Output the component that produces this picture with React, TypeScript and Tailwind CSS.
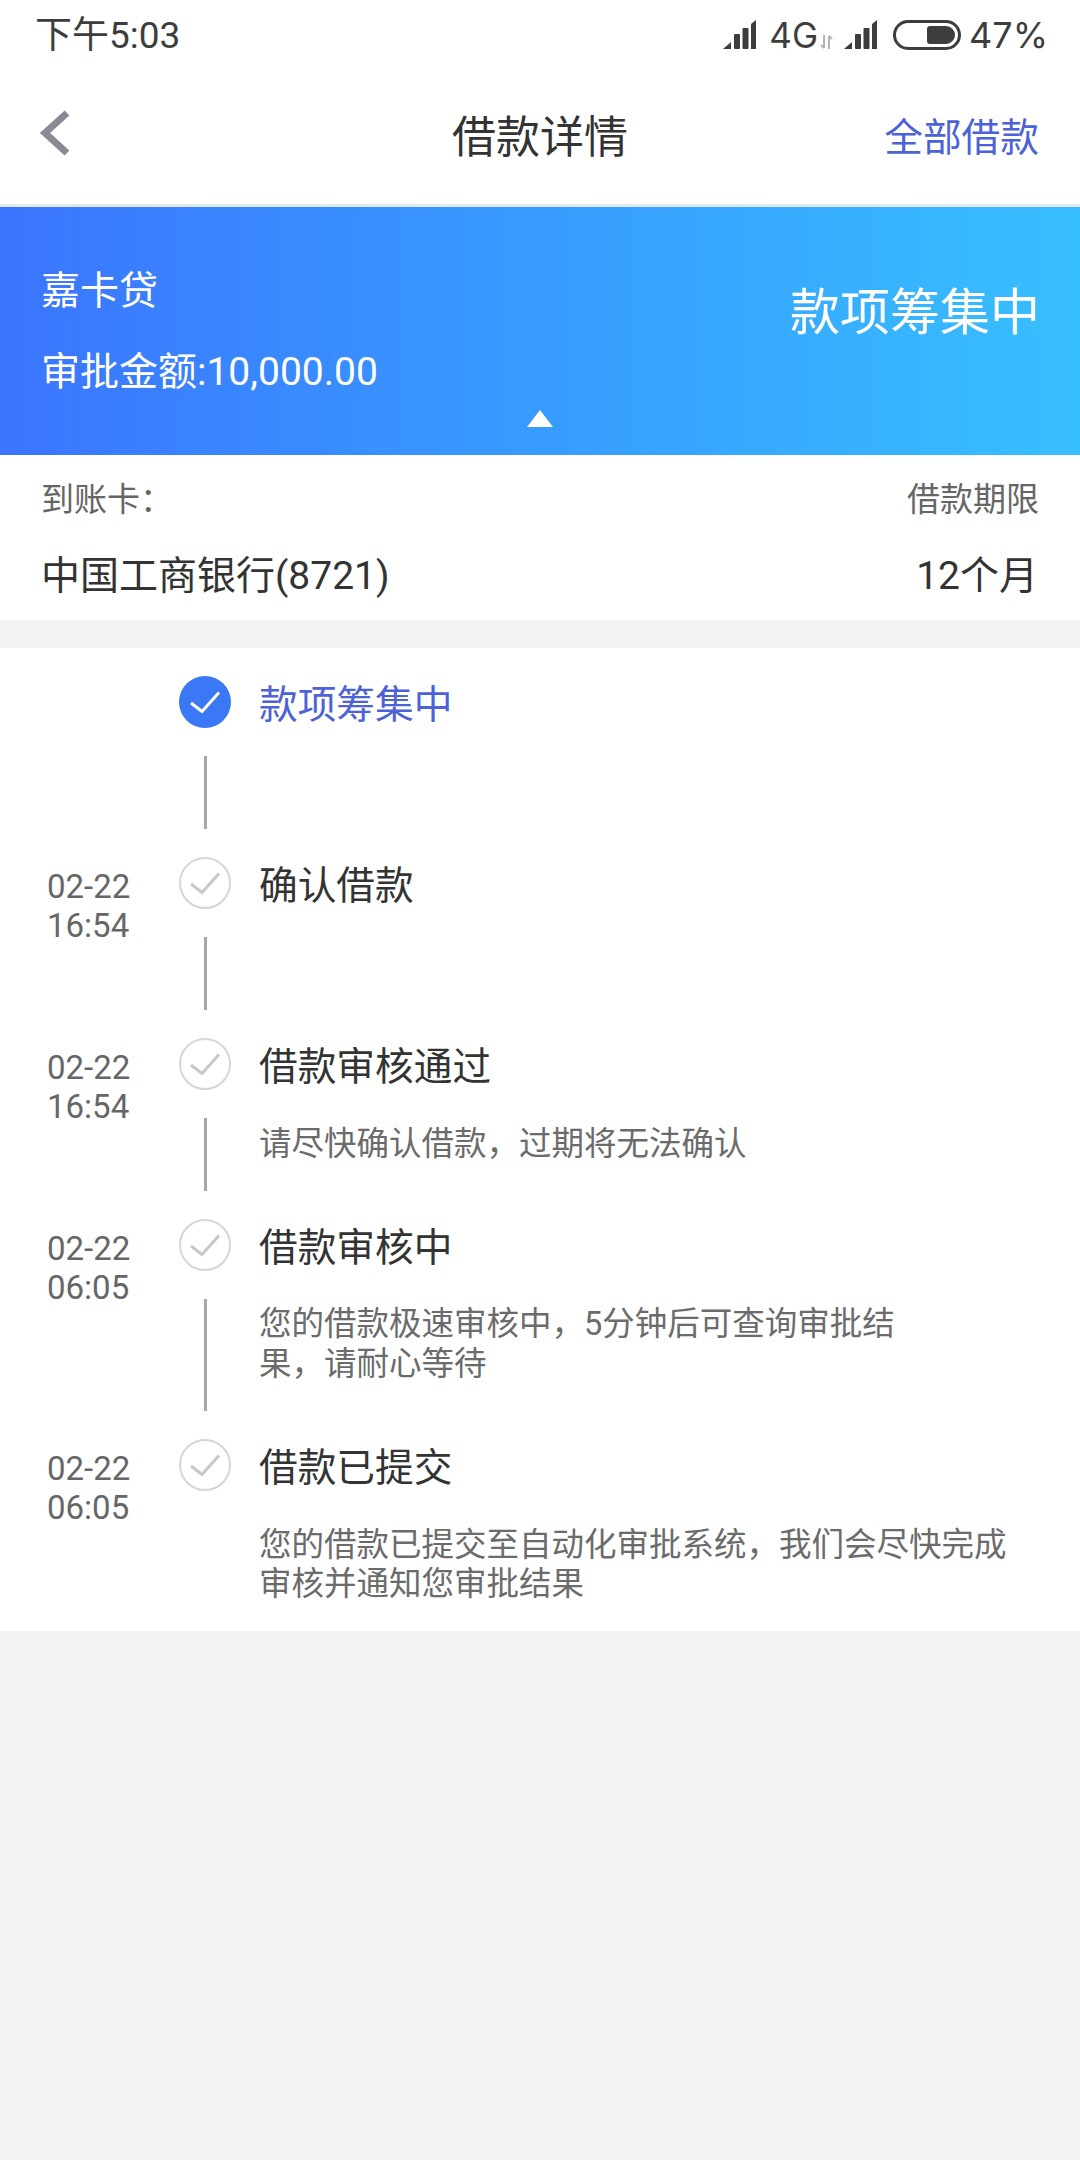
type Step = {
  title: string
  date?: string
  time?: string
  desc?: string[]
  rowH: string
  descGap: string
  active?: boolean
}

const steps: Step[] = [
  { title: '款项筹集中', active: true, rowH: 'h-[181px]', descGap: '' },
  { title: '确认借款', date: '02-22', time: '16:54', rowH: 'h-[181px]', descGap: '' },
  { title: '借款审核通过', date: '02-22', time: '16:54', desc: ['请尽快确认借款\uFF0C过期将无法确认'], rowH: 'h-[181px]', descGap: 'mt-[28px] leading-[40px]' },
  { title: '借款审核中', date: '02-22', time: '06:05', desc: ['您的借款极速审核中\uFF0C5分钟后可查询审批结', '果\uFF0C请耐心等待'], rowH: 'h-[220px]', descGap: 'mt-[27px] leading-[40px]' },
  { title: '借款已提交', date: '02-22', time: '06:05', desc: ['您的借款已提交至自动化审批系统\uFF0C我们会尽快完成', '审核并通知您审批结果'], rowH: 'h-[192px]', descGap: 'mt-[29px] leading-[39px]' },
]

function Signal() {
  return (
    <svg width="33" height="30" viewBox="0 0 33 30" fill="#3d3d3d">
      <path d="M0 29 L8 22 V29 Z" />
      <rect x="11" y="14" width="6" height="15" rx="1" />
      <rect x="19.5" y="8" width="6" height="21" rx="1" />
      <path d="M28 4 L33 0 V29 H28 Z" />
    </svg>
  )
}

function Arrows() {
  return (
    <svg width="13" height="14" viewBox="0 0 13 14" fill="none" stroke="#b5b5b5" strokeWidth="2">
      <path d="M4 0 V13 M1 10 L4 13" />
      <path d="M9 14 V1 M12 4 L9 1" />
    </svg>
  )
}

function Battery() {
  return (
    <div className="flex h-[30px] w-[68px] items-center justify-end rounded-full border-[3px] border-[#3d3d3d] pr-[3px]">
      <div className="h-[18px] w-[28px] rounded-l-[3px] rounded-r-[9px] bg-[#3d3d3d]" />
    </div>
  )
}

function StepIcon({ active }: { active?: boolean }) {
  return (
    <div className={active ? 'flex h-[52px] w-[52px] items-center justify-center rounded-full bg-[#3b78f6]' : 'flex h-[52px] w-[52px] items-center justify-center rounded-full border-[2.5px] border-[#d6d6d6]'}>
      <svg width="32" height="24" viewBox="0 0 32 24" fill="none" stroke={active ? '#ffffff' : '#c8c8c8'} strokeWidth="3">
        <path d="M2 13 L13 21.5 L30 2.5" />
      </svg>
    </div>
  )
}

export default function App() {
  return (
    <div className="flex min-h-[2160px] w-[1080px] flex-col bg-[#f2f2f2] font-['Roboto','Noto_Sans_CJK_SC',sans-serif]">
      <div className="h-[204px] bg-white">
        <div className="flex h-[70px] items-center justify-between pl-[35px] pr-[32px] text-[#3d3d3d]">
          <span className="text-[37px] leading-none">下午5:03</span>
          <div className="flex items-center font-['Inter',sans-serif]">
            <Signal />
            <span className="ml-[13px] text-[35px] leading-none">4G</span>
            <div className="ml-[2px] mt-[14px]"><Arrows /></div>
            <div className="ml-[11px]"><Signal /></div>
            <div className="ml-[16px]"><Battery /></div>
            <span className="ml-[8px] text-[36px] leading-none">47%</span>
          </div>
        </div>
        <div className="relative flex h-[134px] items-center justify-between pl-[37px] pr-[41px] pt-[2px]">
          <svg width="34" height="50" viewBox="0 0 34 50" fill="none" stroke="#8a8a94" strokeWidth="7" className="mt-[-10px]">
            <path d="M30 5 L8 25 L30 45" />
          </svg>
          <span className="absolute left-0 right-0 text-center text-[44px] text-[#333333]">借款详情</span>
          <span className="text-[38.7px] text-[#4c62d6]">全部借款</span>
        </div>
      </div>

      <div className="h-[3px] bg-[#dfeaf5]" />
      <div className="relative flex h-[248px] items-center justify-between bg-gradient-to-r from-[#3b74ff] to-[#38bfff] pl-[41px] pr-[40px] text-white">
        <div className="flex flex-col">
          <span className="text-[39px] leading-[50px]">嘉卡贷</span>
          <span className="mt-[31px] text-[39px] leading-[50px]">审批金额:10,000.00</span>
        </div>
        <span className="mt-[-36px] text-[50px] leading-none">款项筹集中</span>
        <div className="absolute bottom-[28px] left-[527px] h-0 w-0 border-x-[13px] border-b-[17px] border-x-transparent border-b-white" />
      </div>

      <div className="flex h-[165px] flex-col bg-white pl-[41px] pr-[42px] pt-[24px]">
        <div className="flex justify-between text-[33px] leading-[42px] text-[#666666]">
          <span>到账卡{'\uFF1A'}</span>
          <span className="mr-[-1px]">借款期限</span>
        </div>
        <div className="mt-[30px] flex justify-between text-[39px] leading-[50px] text-[#333333]">
          <span>中国工商银行(8721)</span>
          <span>12个月</span>
        </div>
      </div>

      <div className="mt-[28px] flex flex-col bg-white pt-[28px]">
        {steps.map((step, i) => (
          <div key={step.title} className={`flex ${step.rowH}`}>
            <div className="w-[179px] pl-[47px] pt-[10px] text-[33px] leading-[39px] text-[#666666]">
              <div>{step.date}</div>
              <div>{step.time}</div>
            </div>
            <div className="flex w-[52px] flex-col items-center">
              <StepIcon active={step.active} />
              {i < steps.length - 1 && <div className="my-[28px] w-[3px] flex-1 bg-[#a6a6a6]" />}
            </div>
            <div className="ml-[28px] flex flex-col">
              <span className={step.active ? 'text-[38.7px] leading-[58px] text-[#4c62d6]' : 'text-[38.7px] leading-[58px] text-[#333333]'}>
                {step.title}
              </span>
              {step.desc && (
                <div className={`${step.descGap} text-[32.5px] text-[#6b6b6b]`}>
                  {step.desc.map((line) => (
                    <div key={line}>{line}</div>
                  ))}
                </div>
              )}
            </div>
          </div>
        ))}
      </div>
    </div>
  )
}
